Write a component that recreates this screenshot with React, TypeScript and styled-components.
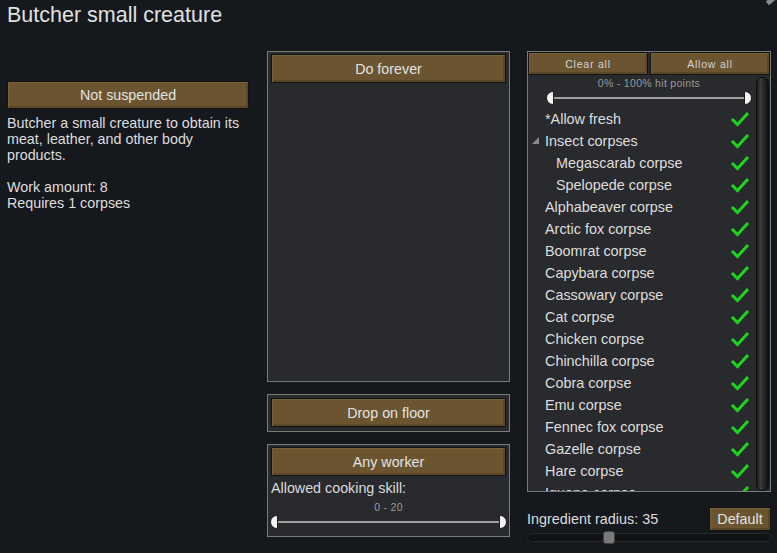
import React from "react";
import styled, { createGlobalStyle } from "styled-components";

const Global = createGlobalStyle`
  html, body { margin: 0; padding: 0; background: #15181d; }
  body { font-family: "Liberation Sans", Arial, sans-serif; color: #dcdcdc; }
  * { box-sizing: border-box; }
`;

const Page = styled.div`
  position: relative;
  width: 777px;
  height: 553px;
  padding: 0 6px 0 7px;
  overflow: hidden;
`;

const Title = styled.div`
  font-size: 21.5px;
  height: 51px;
  padding-top: 3px;
  color: #e0e0e0;
`;

const CloseCorner = styled.div`
  position: absolute;
  top: -3px;
  right: -1px;
  width: 12px;
  height: 5px;
  background: #8a8a8a;
  transform: rotate(-40deg);
`;

const Columns = styled.div`
  display: flex;
  align-items: flex-start;
`;

const LeftCol = styled.div`
  width: 242px;
  padding-top: 30px;
  margin-right: 18px;
`;

const MidCol = styled.div`
  width: 243px;
  display: flex;
  flex-direction: column;
  gap: 12px;
  margin-right: 17px;
`;

const RightCol = styled.div`
  width: 244px;
  display: flex;
  flex-direction: column;
`;

const Button = styled.div<{ $h?: number; $size?: number }>`
  height: ${(p) => p.$h ?? 29}px;
  background: #6b5531;
  border: 1px solid #121212;
  box-shadow: inset 1px 1px 0 #7a6238, inset -2px -2px 0 #5a4728;
  display: flex;
  align-items: center;
  justify-content: center;
  font-size: ${(p) => p.$size ?? 14.3}px;
  color: ${(p) => ((p.$size ?? 14) < 12 ? "#d4d4d4" : "#e2e2e2")};
  letter-spacing: ${(p) => ((p.$size ?? 14) < 12 ? "0.8px" : "0")};
`;

const Desc = styled.div`
  font-size: 14.3px;
  line-height: 16px;
  padding-top: 6px;
  white-space: pre-line;
  color: #dedede;
`;

const Panel = styled.div<{ $h: number }>`
  height: ${(p) => p.$h}px;
  border: 1px solid #7a7a7a;
  background: #292a2d;
  padding: 2px 3px;
`;

const SkillLabel = styled.div`
  font-size: 14.3px;
  margin-top: 4px;
`;

const SmallLabel = styled.div`
  font-size: 10.5px;
  color: #9a9a9a;
  text-align: center;
  letter-spacing: 0.3px;
`;

const RangeSlider = styled.div`
  position: relative;
  height: 14px;
`;

const RangeLine = styled.div`
  position: absolute;
  left: 4px;
  right: 4px;
  top: 6px;
  height: 2px;
  background: #a0a0a0;
`;

const Handle = styled.div<{ $side: "l" | "r" }>`
  position: absolute;
  top: 0;
  ${(p) => (p.$side === "l" ? "left: 0;" : "right: 0;")}
  width: 8px;
  height: 14px;
  background: #f4f4f4;
  border: 1px solid #1a1a1a;
  border-radius: ${(p) => (p.$side === "l" ? "7px 0 0 7px" : "0 7px 7px 0")};
`;

const FilterBox = styled.div`
  position: relative;
  height: 441px;
  border: 1px solid #7a7a7a;
  background: #292a2d;
  overflow: hidden;
`;

const TopButtons = styled.div`
  display: flex;
  gap: 2px;
`;

const HitArea = styled.div`
  padding: 0 18px 0 18px;
  margin-top: 2px;
`;

const List = styled.div`
  margin-top: 3px;
`;

const Row = styled.div<{ $indent: number }>`
  position: relative;
  height: 22px;
  display: flex;
  align-items: center;
  padding-left: ${(p) => 17 + p.$indent * 11}px;
  font-size: 14.4px;
  color: #dedede;
`;

const Tri = styled.span`
  position: absolute;
  left: 4px;
  top: 7px;
  width: 0;
  height: 0;
  border-left: 7px solid transparent;
  border-bottom: 7px solid #8a8a8a;
`;

const Check = styled.svg`
  position: absolute;
  left: 202px;
  top: 2px;
`;

const ScrollBar = styled.div`
  position: absolute;
  right: 1px;
  top: 25px;
  bottom: 0;
  width: 13px;
  border-radius: 6px;
  background: linear-gradient(90deg, #1a1a1a 0%, #3a3a3a 30%, #2a2a2a 60%, #111 100%);
  border: 1px solid #0c0c0c;
`;

const Bottom = styled.div`
  margin-top: 15px;
  display: flex;
  align-items: center;
  justify-content: space-between;
  height: 24px;
`;

const RadiusLabel = styled.div`
  font-size: 14.4px;
`;

const Track = styled.div`
  position: relative;
  margin-top: 2px;
  height: 9px;
  border-radius: 5px;
  background: #101214;
  border: 1px solid #24272b;
`;

const Thumb = styled.div`
  position: absolute;
  top: -3px;
  left: 75px;
  width: 12px;
  height: 13px;
  border-radius: 3px;
  background: #7a7a7a;
  border: 1px solid #444;
`;

const rows: [string, number, boolean?][] = [
  ["*Allow fresh", 0],
  ["Insect corpses", 0, true],
  ["Megascarab corpse", 1],
  ["Spelopede corpse", 1],
  ["Alphabeaver corpse", 0],
  ["Arctic fox corpse", 0],
  ["Boomrat corpse", 0],
  ["Capybara corpse", 0],
  ["Cassowary corpse", 0],
  ["Cat corpse", 0],
  ["Chicken corpse", 0],
  ["Chinchilla corpse", 0],
  ["Cobra corpse", 0],
  ["Emu corpse", 0],
  ["Fennec fox corpse", 0],
  ["Gazelle corpse", 0],
  ["Hare corpse", 0],
  ["Iguana corpse", 0],
];

const CheckIcon = () => (
  <Check width="20" height="18" viewBox="0 0 20 18">
    <path d="M3 10 L7.5 14.5 L17 4" fill="none" stroke="#1fd41f" strokeWidth="3" strokeLinecap="square" />
  </Check>
);

export default function App() {
  return (
    <Page>
      <Global />
      <CloseCorner />
      <Title>Butcher small creature</Title>
      <Columns>
        <LeftCol>
          <Button $h={28}>Not suspended</Button>
          <Desc>
            {"Butcher a small creature to obtain its\nmeat, leather, and other body\nproducts.\n\nWork amount: 8\nRequires 1 corpses"}
          </Desc>
        </LeftCol>
        <MidCol>
          <Panel $h={331}>
            <Button>Do forever</Button>
          </Panel>
          <Panel $h={38}>
            <Button style={{ marginTop: 1 }}>Drop on floor</Button>
          </Panel>
          <Panel $h={93}>
            <Button>Any worker</Button>
            <SkillLabel>Allowed cooking skill:</SkillLabel>
            <SmallLabel style={{ marginTop: 5 }}>0 - 20</SmallLabel>
            <RangeSlider style={{ marginTop: 2, marginLeft: -1, marginRight: -1 }}>
              <RangeLine />
              <Handle $side="l" />
              <Handle $side="r" />
            </RangeSlider>
          </Panel>
        </MidCol>
        <RightCol>
          <FilterBox>
            <TopButtons>
              <Button $h={23} $size={10.5} style={{ flex: 1 }}>Clear all</Button>
              <Button $h={23} $size={10.5} style={{ flex: 1 }}>Allow all</Button>
            </TopButtons>
            <HitArea>
              <SmallLabel>0% - 100% hit points</SmallLabel>
              <RangeSlider style={{ marginTop: 2 }}>
                <RangeLine />
                <Handle $side="l" />
                <Handle $side="r" />
              </RangeSlider>
            </HitArea>
            <List>
              {rows.map(([name, indent, tri]) => (
                <Row key={name} $indent={indent}>
                  {tri && <Tri />}
                  {name}
                  <CheckIcon />
                </Row>
              ))}
            </List>
            <ScrollBar />
          </FilterBox>
          <Bottom>
            <RadiusLabel>Ingredient radius: 35</RadiusLabel>
            <Button $h={24} $size={14.3} style={{ width: 62 }}>Default</Button>
          </Bottom>
          <Track>
            <Thumb />
          </Track>
        </RightCol>
      </Columns>
    </Page>
  );
}
